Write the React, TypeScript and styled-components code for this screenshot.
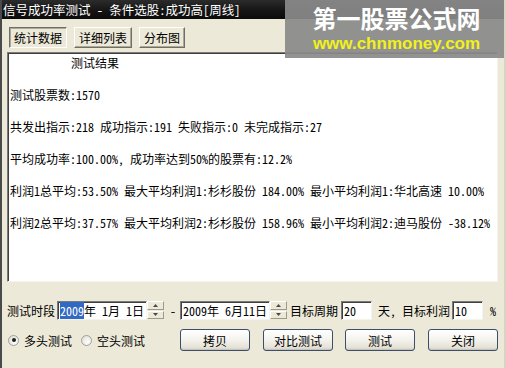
import React from 'react';
import styled, { createGlobalStyle } from 'styled-components';

const GlobalStyle = createGlobalStyle`
	html, body {
		margin: 0;
		padding: 0;
		background: #ece9d8;
	}
`

const FONT = `"Noto Sans Mono CJK SC", "Noto Sans CJK SC", monospace`

const Window = styled.div`
	position: relative;
	width: 506px;
	height: 368px;
	box-sizing: border-box;
	background: #ece9d8;
	border-left: 2px solid #4a4a4a;
	border-right: 2px solid #d8d4c4;
	font-family: ${FONT};
	font-size: 12px;
	color: #000;
	overflow: hidden;
	display: flex;
	flex-direction: column;
`
const TitleBar = styled.div`
	height: 19px;
	margin-left: -2px;
	padding-left: 3px;
	display: flex;
	align-items: center;
	background: linear-gradient(180deg, #2c2c2c 0%, #151515 55%, #0b0b0b 100%);
	color: #fff;
	font-size: 12.5px;
	white-space: pre;
`
const Watermark = styled.div`
	position: absolute;
	top: 0;
	left: 283px;
	width: 223px;
	height: 58px;
	background: rgba(138, 138, 138, 0.93);
	display: flex;
	flex-direction: column;
	align-items: center;
	padding-top: 4px;
	box-sizing: border-box;
	.cn {
		color: #fff;
		font-family: "Noto Sans CJK SC", sans-serif;
		font-weight: 700;
		font-size: 24px;
		line-height: 28px;
	}
	.url {
		color: #f2f21a;
		font-family: "Liberation Sans", Arial, sans-serif;
		font-weight: 700;
		font-size: 17px;
		line-height: 20px;
		margin-top: 2px;
	}
`
const TabRow = styled.div`
	display: flex;
	gap: 7px;
	margin-top: 8px;
	padding-left: 7px;
	height: 21px;
`
const Tab = styled.div<{ $active?: boolean }>`
	height: 21px;
	padding: 0 4px;
	box-sizing: border-box;
	display: flex;
	align-items: center;
	background: #ece9d8;
	border: 1px solid;
	border-color: ${({ $active }) => ($active ? '#716f64 #fff #fff #716f64' : '#fff #716f64 #716f64 #fff')};
	box-shadow: ${({ $active }) => ($active ? 'inset 1px 1px 0 #aca899' : 'inset -1px -1px 0 #aca899')};
	font-size: 12px;
`
const ResultPanel = styled.div`
	margin: 4px 6px 0 5px;
	height: 230px;
	box-sizing: border-box;
	background: #fff;
	border: 1px solid;
	border-color: #7a7a7a #f4f3ee #f4f3ee #7a7a7a;
	box-shadow: inset 1px 1px 0 #404040;
	padding: 2px 0 0 2px;
	line-height: 16px;
	white-space: pre;
	font-size: 12px;
`
const Line = styled.div<{ $indent?: number }>`
	height: 32px;
	padding-left: ${({ $indent }) => $indent ?? 0}px;
`
const ParamRow = styled.div`
	display: flex;
	align-items: center;
	height: 18px;
	margin-top: 19px;
	padding-left: 5px;
	white-space: pre;
`
const Label = styled.span<{ $ml?: number }>`
	margin-left: ${({ $ml }) => $ml ?? 0}px;
`
const Sunken = styled.div<{ $w: number; $ml?: number }>`
	width: ${({ $w }) => $w}px;
	height: 19px;
	margin-left: ${({ $ml }) => $ml ?? 0}px;
	box-sizing: border-box;
	background: #fff;
	border: 1px solid;
	border-color: #7a7a7a #f4f3ee #f4f3ee #7a7a7a;
	box-shadow: inset 1px 1px 0 #404040;
	display: flex;
	align-items: center;
	padding-left: 2px;
	white-space: pre;
`
const Selected = styled.span`
	background: #316ac5;
	color: #fff;
`
const Spinner = styled.div`
	width: 17px;
	height: 18px;
	display: flex;
	flex-direction: column;
	gap: 1px;
`
const SpinBtn = styled.div`
	flex: 1;
	background: #ece9d8;
	border: 1px solid;
	border-color: #fff #9d9a8c #9d9a8c #fff;
	display: flex;
	align-items: center;
	justify-content: center;
`
const ActionRow = styled.div`
	display: flex;
	align-items: center;
	height: 22px;
	margin-top: 10px;
	padding-left: 6px;
`
const Radio = styled.label<{ $ml?: number }>`
	display: flex;
	align-items: center;
	gap: 5px;
	margin-left: ${({ $ml }) => $ml ?? 0}px;
`
const RadioDot = styled.span<{ $checked?: boolean }>`
	width: 11px;
	height: 11px;
	box-sizing: border-box;
	border-radius: 50%;
	border: 1px solid #a0a0a0;
	background: radial-gradient(circle at 65% 65%, #fff 0%, #e6e4da 70%, #cfccbd 100%);
	display: flex;
	align-items: center;
	justify-content: center;
	&::after {
		content: '';
		width: 4px;
		height: 4px;
		border-radius: 50%;
		background: ${({ $checked }) => ($checked ? '#1e1e1e' : 'transparent')};
	}
`
const Button = styled.button<{ $ml?: number }>`
	width: 70px;
	height: 22px;
	margin-left: ${({ $ml }) => $ml ?? 0}px;
	border: 1px solid #3c4e6e;
	border-radius: 3px;
	background: linear-gradient(180deg, #ffffff 0%, #f5f4ef 45%, #e6e3d8 85%, #d4d0c4 100%);
	box-shadow: inset 0 -1px 0 #c8c4b6;
	font-family: ${FONT};
	font-size: 12px;
	color: #000;
	padding: 0;
`

const Arrow = ({ up }: { up?: boolean }) => (
	<svg width="5" height="3" viewBox="0 0 5 3">
		<path d={up ? 'M2.5 0 L5 3 L0 3 Z' : 'M0 0 L5 0 L2.5 3 Z'} fill="#4a4a4a" />
	</svg>
)

const DateField = ({ month, day, ml, selected }: { month: string; day: string; ml?: number; selected?: boolean }) => (
	<>
		<Sunken $w={90} $ml={ml}>
			{selected ? <Selected>2009</Selected> : '2009'}
			{`年${month}月${day}日`}
		</Sunken>
		<Spinner>
			<SpinBtn><Arrow up /></SpinBtn>
			<SpinBtn><Arrow /></SpinBtn>
		</Spinner>
	</>
)

const App = () => {
	const lines = [
		'测试股票数:1570',
		'共发出指示:218 成功指示:191 失败指示:0 未完成指示:27',
		'平均成功率:100.00%, 成功率达到50%的股票有:12.2%',
		'利润1总平均:53.50% 最大平均利润1:杉杉股份 184.00% 最小平均利润1:华北高速 10.00%',
		'利润2总平均:37.57% 最大平均利润2:杉杉股份 158.96% 最小平均利润2:迪马股份 -38.12%',
	]

	return (
		<Window>
			<GlobalStyle />
			<TitleBar>信号成功率测试 - 条件选股:成功高[周线]</TitleBar>
			<Watermark>
				<div className="cn">第一股票公式网</div>
				<div className="url">www.chnmoney.com</div>
			</Watermark>

			<TabRow>
				<Tab $active>统计数据</Tab>
				<Tab>详细列表</Tab>
				<Tab>分布图</Tab>
			</TabRow>

			<ResultPanel>
				<Line $indent={61}>测试结果</Line>
				{lines.map((v, i) => (
					<Line key={i}>{v}</Line>
				))}
			</ResultPanel>

			<ParamRow>
				<Label>测试时段</Label>
				<DateField month=" 1" day=" 1" ml={2} selected />
				<Label $ml={6}>-</Label>
				<DateField month=" 6" day="11" ml={4} />
				<Label $ml={3}>目标周期</Label>
				<Sunken $w={31} $ml={3}>20</Sunken>
				<Label $ml={6}>天, 目标利润</Label>
				<Sunken $w={31} $ml={2}>10</Sunken>
				<Label $ml={7}>%</Label>
			</ParamRow>

			<ActionRow>
				<Radio><RadioDot $checked />多头测试</Radio>
				<Radio $ml={9}><RadioDot />空头测试</Radio>
				<Button $ml={35}>拷贝</Button>
				<Button $ml={13}>对比测试</Button>
				<Button $ml={12}>测试</Button>
				<Button $ml={13}>关闭</Button>
			</ActionRow>
		</Window>
	)
}

export default App
